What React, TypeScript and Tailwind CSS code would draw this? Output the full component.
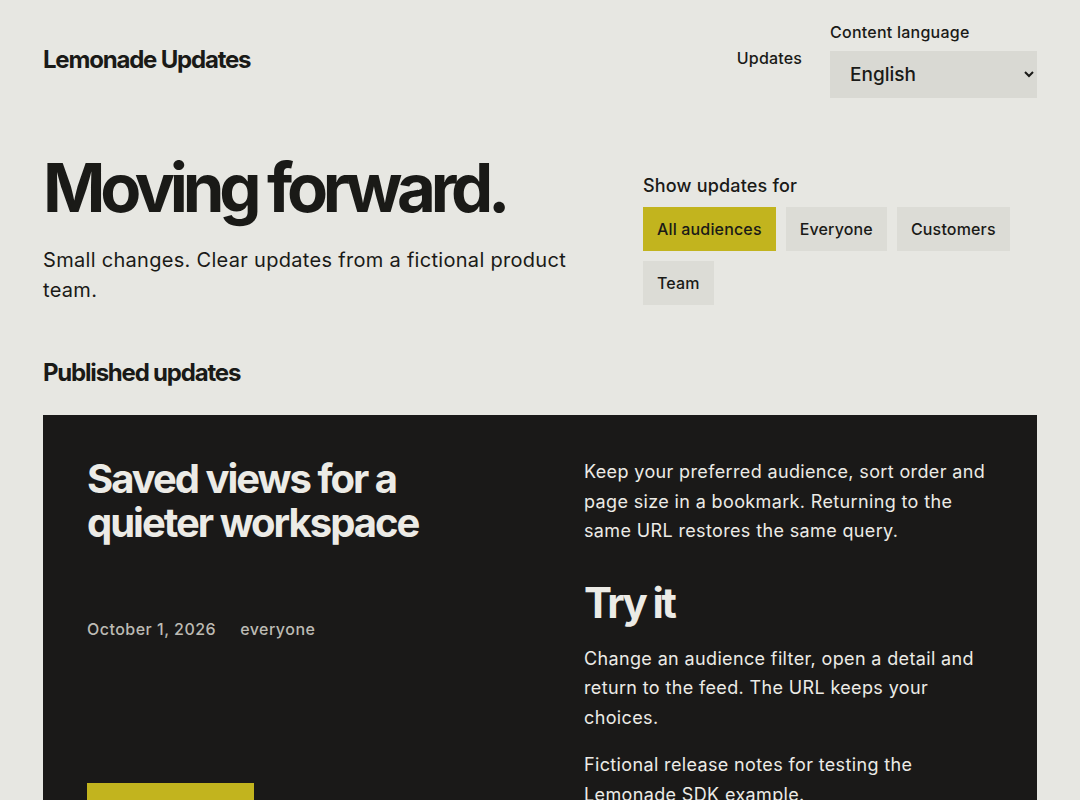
import { useState } from 'react'

const audiences = [
  { id: 'all', label: 'All audiences' },
  { id: 'everyone', label: 'Everyone' },
  { id: 'customers', label: 'Customers' },
  { id: 'team', label: 'Team' },
]

function Header() {
  return (
    <header className="flex items-center justify-between pt-[22px]">
      <a href="#" className="text-[24px] font-bold tracking-[-0.05em] text-[#1a1a17]">
        Lemonade Updates
      </a>
      <div className="flex items-end gap-7">
        <a href="#" className="mb-[28px] text-[16px] font-medium tracking-[0.01em] text-[#1a1a17]">
          Updates
        </a>
        <label className="flex flex-col gap-[9px]">
          <span className="text-[16px] font-medium leading-5 tracking-[0.015em] text-[#1a1a17]">
            Content language
          </span>
          <select
            defaultValue="en"
            className="h-[47px] w-[207px] bg-[#d9d9d3] px-[16px] text-[19px] font-medium text-[#1a1a17] outline-none"
          >
            <option value="en">English</option>
            <option value="de">Deutsch</option>
          </select>
        </label>
      </div>
    </header>
  )
}

function Hero() {
  const [active, setActive] = useState('all')

  return (
    <section className="mt-[56px] grid grid-cols-[552px_1fr] gap-12">
      <div>
        <h1 className="text-[67px] font-bold leading-none tracking-[-0.078em] text-[#1a1a17]">
          Moving forward.
        </h1>
        <p className="mt-[24px] text-[20px] leading-[30px] tracking-[0.015em] text-[#1a1a17]">
          Small changes. Clear updates from a fictional product team.
        </p>
      </div>
      <div className="pt-[18px]">
        <p className="text-[18px] font-medium tracking-[0.01em] text-[#1a1a17]">Show updates for</p>
        <div className="mt-[8px] flex flex-wrap gap-[10px]">
          {audiences.map((a) => (
            <button
              key={a.id}
              onClick={() => setActive(a.id)}
              className={`h-[44px] px-[14px] text-[16px] font-medium tracking-[0.01em] text-[#1a1a17] ${
                active === a.id ? 'bg-[#c2b41e]' : 'bg-[#dcdcd6]'
              }`}
            >
              {a.label}
            </button>
          ))}
        </div>
      </div>
    </section>
  )
}

function UpdateCard() {
  return (
    <article className="grid grid-cols-[453px_1fr] gap-[44px] bg-[#1a1918] px-[44px] pb-[44px] pt-[42px] text-[#ecebe6]">
      <div className="flex flex-col">
        <h3 className="max-w-[420px] text-[40px] font-bold leading-[44px] tracking-[-0.05em]">
          Saved views for a quieter workspace
        </h3>
        <div className="mt-[72px] flex gap-6 text-[16px] font-medium tracking-[0.03em] text-[#bdbbb4]">
          <span>October 1, 2026</span>
          <span>everyone</span>
        </div>
        <a
          href="#"
          className="mt-[142px] flex h-[48px] w-[167px] items-center justify-center bg-[#c2b41e] text-[16px] font-medium tracking-[0.02em] text-[#1a1a17]"
        >
          Read update
        </a>
      </div>
      <div className="text-[18px] leading-[29.5px] tracking-[0.02em]">
        <p>
          Keep your preferred audience, sort order and page size in a bookmark. Returning to the same URL
          restores the same query.
        </p>
        <h4 className="mt-[33px] text-[42px] font-bold leading-[48px] tracking-[-0.06em]">Try it</h4>
        <p className="mt-[17px]">
          Change an audience filter, open a detail and return to the feed. The URL keeps your choices.
        </p>
        <p className="mt-[18px]">Fictional release notes for testing the Lemonade SDK example.</p>
      </div>
    </article>
  )
}

export default function App() {
  return (
    <div className="min-h-screen bg-[#e7e7e2] px-[43px] pb-16 font-['Inter',sans-serif] text-[#1a1a17]">
      <Header />
      <Hero />
      <section className="mt-[50px]">
        <h2 className="text-[24px] font-bold tracking-[-0.05em]">Published updates</h2>
        <div className="mt-[24px]">
          <UpdateCard />
        </div>
      </section>
    </div>
  )
}
